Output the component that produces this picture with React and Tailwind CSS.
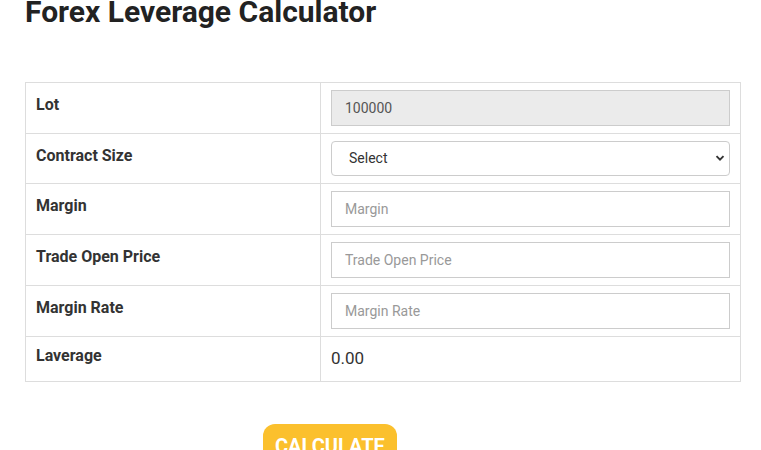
import React from 'react';

const FIELDS = [
  { label: 'Lot', type: 'readonly', value: '100000' },
  { label: 'Contract Size', type: 'select' },
  { label: 'Margin', type: 'input', placeholder: 'Margin' },
  { label: 'Trade Open Price', type: 'input', placeholder: 'Trade Open Price' },
  { label: 'Margin Rate', type: 'input', placeholder: 'Margin Rate' },
];

const FieldControl = ({ field }) => {
  if (field.type === 'readonly') {
    return (
      <input
        readOnly
        value={field.value}
        className="block w-full h-[36px] border border-[#cccccc] bg-[#ebebeb] px-[13px] text-[14px] text-[#555555] outline-none"
      />
    );
  }
  if (field.type === 'select') {
    return (
      <div className="relative">
        <select className="block w-full h-[35px] appearance-none rounded-[4px] border border-[#cccccc] bg-white pl-[17px] pr-8 text-[14px] text-[#333333] outline-none">
          <option>Select</option>
        </select>
        <svg
          className="pointer-events-none absolute right-[5px] top-[12px]"
          width="10"
          height="10"
          viewBox="0 0 10 10"
        >
          <path d="M1.5 3.2 L5 6.7 L8.5 3.2" fill="none" stroke="#333" strokeWidth="1.9" />
        </svg>
      </div>
    );
  }
  return (
    <input
      placeholder={field.placeholder}
      className="block w-full h-[36px] border border-[#cccccc] bg-white px-[13px] text-[14px] text-[#555555] placeholder:text-[#999999] outline-none"
    />
  );
};

export default function App() {
  return (
    <div className="min-h-[450px] bg-white px-[25px] font-['Roboto',sans-serif] overflow-hidden">
      <h1 className="mt-[-6px] text-[30px] leading-[36px] font-bold text-[#222222]">
        Forex Leverage Calculator
      </h1>

      <table className="mt-[52px] w-[716px] border-collapse border border-[#dddddd]">
        <tbody>
          {FIELDS.map((field) => (
            <tr key={field.label} className="h-[50px]">
              <td className="w-[295px] border border-[#dddddd] px-[10px] pt-[10px] align-top text-[16px] leading-[24px] font-bold text-[#333333]">
                {field.label}
              </td>
              <td className="border border-[#dddddd] px-[10px] py-[7px] align-top">
                <FieldControl field={field} />
              </td>
            </tr>
          ))}
          <tr className="h-[45px]">
            <td className="border border-[#dddddd] px-[10px] pt-[7px] align-top text-[16px] leading-[24px] font-bold text-[#333333]">
              Laverage
            </td>
            <td className="border border-[#dddddd] px-[10px] pt-[9px] align-top text-[17px] leading-[25px] text-[#333333]">
              0.00
            </td>
          </tr>
        </tbody>
      </table>

      <button className="mt-[42px] ml-[238px] rounded-[12px] bg-[#fbc02d] px-[12px] pt-[10px] pb-[10px] text-[20px] leading-[24px] font-bold uppercase text-white">
        Calculate
      </button>
    </div>
  );
}
